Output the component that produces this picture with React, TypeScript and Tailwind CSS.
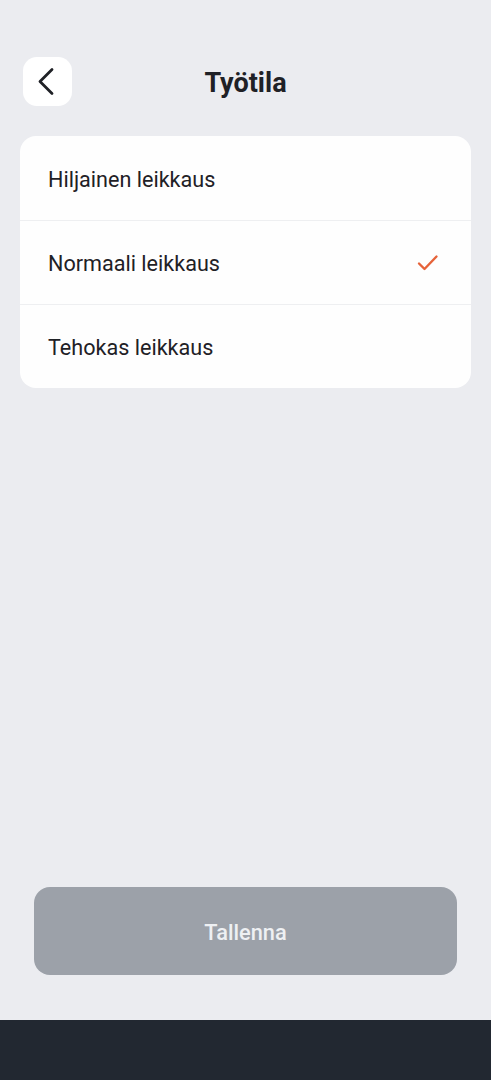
import React from 'react';

const options = ['Hiljainen leikkaus', 'Normaali leikkaus', 'Tehokas leikkaus'];

export default function App() {
  const selected = 1;

  return (
    <div
      className="flex h-[1080px] w-full flex-col bg-[#ebecf0] text-[#1f2126]"
      style={{ fontFamily: 'Roboto, "Noto Sans", sans-serif' }}
    >
      {/* Header */}
      <div className="relative mx-[23px] mt-[57px] flex h-[49px] items-center justify-center">
        <button className="absolute left-0 top-0 flex h-[49px] w-[49px] items-center justify-center rounded-[14px] bg-white">
          <svg width="49" height="49" viewBox="0 0 49 49" fill="none" stroke="#1f2126" strokeWidth="2.8" strokeLinecap="round" strokeLinejoin="round">
            <path d="M29 12.5 L17 24.5 L29 36.5" />
          </svg>
        </button>
        <h1 className="pt-[4px] text-[27px] font-bold">Työtila</h1>
      </div>

      {/* Options */}
      <div className="mx-[20px] mt-[30px] overflow-hidden rounded-[16px] bg-[#fefefe]">
        {options.map((o, i) => (
          <div
            key={o}
            className={`flex h-[84px] items-center justify-between pl-[28px] pr-[32px] ${i > 0 ? 'border-t border-[#eeeff1]' : ''}`}
          >
            <span className="pt-[4px] text-[21.6px] font-normal">{o}</span>
            {i === selected && (
              <svg width="22" height="18" viewBox="0 0 22 18" fill="none" stroke="#e6633a" strokeWidth="2.4" strokeLinecap="round" strokeLinejoin="round">
                <path d="M2 9.5 L7.5 15 L19.5 2.5" />
              </svg>
            )}
          </div>
        ))}
      </div>

      <div className="flex-1" />

      {/* Save button */}
      <div className="mx-[34px] mb-[45px]">
        <button className="flex h-[88px] w-full items-center justify-center rounded-[16px] bg-[#9ca1a9] pt-[4px] text-[21.8px] font-medium text-[#eef0f3]">
          Tallenna
        </button>
      </div>

      {/* Bottom bar */}
      <div className="h-[60px] bg-[#222831]" />
    </div>
  );
}
